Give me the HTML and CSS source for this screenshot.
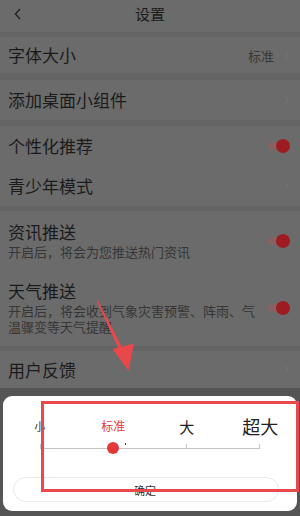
FILE: index.html
```html
<!DOCTYPE html>
<html lang="zh-CN">
<head>
<meta charset="utf-8">
<title>设置</title>
<link rel="stylesheet" href="styles.css">
</head>
<body>
<div class="screen">
  <header class="topbar">
    <span class="back">
      <svg width="10" height="14" viewBox="0 0 10 14"><path d="M7 2 L2.5 7 L7 12" fill="none" stroke="#1e1e1e" stroke-width="1.3"/></svg>
    </span>
    <h1>设置</h1>
    <span></span>
  </header>
  <div class="gap g5"></div>
  <div class="row r36">
    <span class="label">字体大小</span>
    <span class="value">标准</span>
    <span class="chev"></span>
  </div>
  <div class="gap g7"></div>
  <div class="row">
    <span class="label">添加桌面小组件</span>
    <span class="chev"></span>
  </div>
  <div class="gap g6"></div>
  <div class="row">
    <span class="label">个性化推荐</span>
    <span class="toggle"><i class="track"></i><i class="knob"></i></span>
  </div>
  <div class="row">
    <span class="label">青少年模式</span>
    <span class="chev"></span>
  </div>
  <div class="gap g5"></div>
  <div class="row tall t1">
    <div class="text">
      <span class="title">资讯推送</span>
      <span class="sub">开启后，将会为您推送热门资讯</span>
    </div>
    <span class="toggle"><i class="track"></i><i class="knob"></i></span>
  </div>
  <div class="row tall t2">
    <div class="text">
      <span class="title">天气推送</span>
      <span class="sub">开启后，将会收到气象灾害预警、阵雨、气温骤变等天气提醒</span>
    </div>
    <span class="toggle"><i class="track"></i><i class="knob"></i></span>
  </div>
  <div class="gap g5"></div>
  <div class="row r37">
    <span class="label">用户反馈</span>
    <span class="chev"></span>
  </div>
  <div class="sheet-wrap">
    <div class="sheet">
      <div class="labels">
        <span class="s1">小</span>
        <span class="s2">标准</span>
        <span class="s3">大</span>
        <span class="s4">超大</span>
      </div>
      <div class="slider">
        <div class="line"></div>
        <div class="ticks">
          <i></i><i></i><i></i><i></i>
        </div>
        <span class="knob-big"></span>
        <span class="speck"></span>
      </div>
      <div class="btn">确定</div>
    </div>
  </div>
  <div class="mark-box"></div>
  <svg class="arrow" width="300" height="516" viewBox="0 0 300 516">
    <polygon points="96.5,301 98,300.5 124.5,352 121,354" fill="#e8484b"/>
    <polygon points="112.5,349 134,343.5 128.5,371" fill="#e8484b"/>
  </svg>
</div>
</body>
</html>
```
FILE: styles.css
```css
* { box-sizing: border-box; margin: 0; padding: 0; }
html, body { width: 300px; height: 516px; overflow: hidden; }
body {
  background: #6b6b6b;
  font-family: "Noto Sans CJK SC", "Noto Sans", sans-serif;
  color: #1b1b1b;
}
.screen { position: relative; width: 300px; height: 516px; display: flex; flex-direction: column; }

.topbar {
  height: 32px;
  display: grid;
  grid-template-columns: 40px 1fr 40px;
  align-items: center;
}
.back { display: flex; padding-left: 13px; margin-top: -4px; }
.topbar h1 {
  font-size: 15px;
  font-weight: 400;
  text-align: center;
  line-height: 20px;
  margin-top: -4px;
  color: #1b1b1b;
}

.gap { background: #646464; flex: none; }
.g5 { height: 5px; }
.g6 { height: 6px; }
.g7 { height: 7px; }

.row {
  height: 40px;
  flex: none;
  display: flex;
  align-items: center;
  padding: 0 9px 0 8px;
}
.r36 { height: 36px; }
.r37 { height: 37px; }
.label { font-size: 17px; line-height: 20px; flex: 1; }
.value { font-size: 13px; color: #383838; margin-right: 9px; }
.chev {
  width: 5px; height: 5px;
  border-top: 1px solid #757575;
  border-right: 1px solid #757575;
  transform: rotate(45deg);
  margin-right: 3px;
}

.t1 { height: 59px; }
.t2 { height: 76px; }
.text { flex: 1; display: flex; flex-direction: column; }
.title { font-size: 17px; line-height: 20px; display: block; }
.sub {
  display: block;
  font-size: 13px;
  line-height: 16px;
  color: #363636;
  margin-top: 2px;
  max-width: 252px;
}

.toggle { position: relative; width: 22px; height: 14px; flex: none; margin-right: 1px; }
.toggle .track {
  position: absolute; left: 0; top: 3px;
  width: 18px; height: 8px;
  border-radius: 4px;
  background: #866262;
}
.toggle .knob {
  position: absolute; right: 0; top: 0;
  width: 14px; height: 14px;
  border-radius: 50%;
  background: #9e1b22;
}

.sheet-wrap {
  flex: 1;
  background: #555555;
  padding: 8px 3px 5px 3px;
  display: flex;
}
.sheet {
  flex: 1;
  background: #ffffff;
  border-radius: 9px;
  display: flex;
  flex-direction: column;
}
.labels {
  margin-top: 20px;
  height: 20px;
  display: grid;
  grid-template-columns: repeat(4, 1fr);
  align-items: end;
  text-align: center;
  color: #222;
}
.labels span { display: block; }
.s1 { font-size: 11px; line-height: 12px; margin-bottom: 4px; color: #333; }
.s2 { font-size: 12px; line-height: 14px; margin-bottom: 3px; color: #e53b3b; }
.s3 { font-size: 15px; line-height: 16px; margin-bottom: 1px; }
.s4 { font-size: 18px; line-height: 20px; margin-bottom: 0; }

.slider {
  position: relative;
  margin: 6px 36.75px 0;
  height: 12px;
}
.line {
  position: absolute; left: 0; right: 0; top: 5.5px;
  height: 1px; background: #c4c4c4;
}
.ticks {
  position: absolute; left: 0; right: 0; top: 2px;
  display: flex; justify-content: space-between;
}
.ticks i { width: 1px; height: 4px; background: #c4c4c4; }
.knob-big {
  position: absolute;
  left: 67.5px; top: 0;
  width: 12px; height: 12px;
  border-radius: 50%;
  background: #e5373a;
}
.speck {
  position: absolute; left: 85px; top: 1px;
  width: 1.5px; height: 1.5px; background: #444;
}
.btn {
  margin: 23px 18px 0 10px;
  height: 25px;
  border: 1px solid #e9e9e9;
  border-radius: 13px;
  font-size: 11px;
  color: #333;
  display: flex;
  align-items: center;
  justify-content: center;
  padding-right: 2px;
}

.mark-box {
  position: absolute;
  left: 41px; top: 401px;
  width: 258px; height: 91px;
  border: 3px solid #e9494d;
}
.arrow { position: absolute; left: 0; top: 0; pointer-events: none; }
```
